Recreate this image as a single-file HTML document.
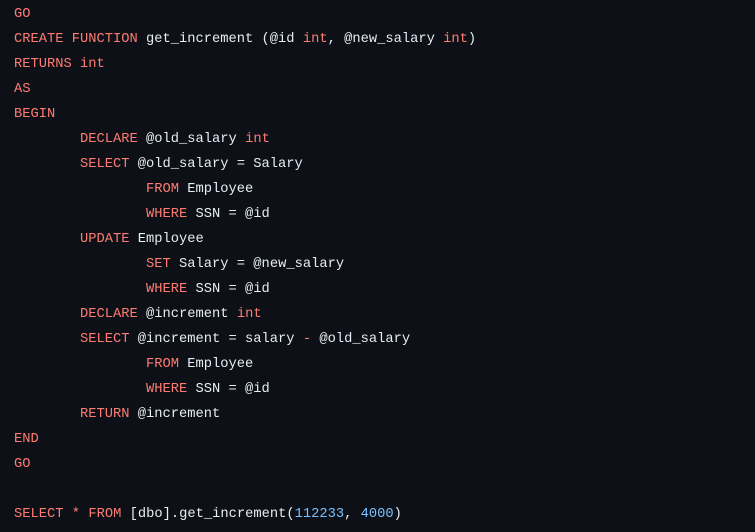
<!DOCTYPE html>
<html><head><style>
html,body{margin:0;padding:0;background:#0d1117;width:755px;height:532px;overflow:hidden}
pre{margin:0;padding:0 0 0 14px;font-family:"Liberation Mono",monospace;font-size:13.75px;line-height:25px;color:#e6edf3;tab-size:8;position:relative;top:2px}
.k{color:#ff7b72}.n{color:#79c0ff}
</style></head><body><pre><span class="k">GO</span>
<span class="k">CREATE FUNCTION</span> get_increment (@id <span class="k">int</span>, @new_salary <span class="k">int</span>)
<span class="k">RETURNS</span> <span class="k">int</span>
<span class="k">AS</span>
<span class="k">BEGIN</span>
	<span class="k">DECLARE</span> @old_salary <span class="k">int</span>
	<span class="k">SELECT</span> @old_salary = Salary
		<span class="k">FROM</span> Employee
		<span class="k">WHERE</span> SSN = @id
	<span class="k">UPDATE</span> Employee
		<span class="k">SET</span> Salary = @new_salary
		<span class="k">WHERE</span> SSN = @id
	<span class="k">DECLARE</span> @increment <span class="k">int</span>
	<span class="k">SELECT</span> @increment = salary <span class="k">-</span> @old_salary
		<span class="k">FROM</span> Employee
		<span class="k">WHERE</span> SSN = @id
	<span class="k">RETURN</span> @increment
<span class="k">END</span>
<span class="k">GO</span>

<span class="k">SELECT</span> <span class="k">*</span> <span class="k">FROM</span> [dbo].get_increment(<span class="n">112233</span>, <span class="n">4000</span>)
</pre></body></html>
